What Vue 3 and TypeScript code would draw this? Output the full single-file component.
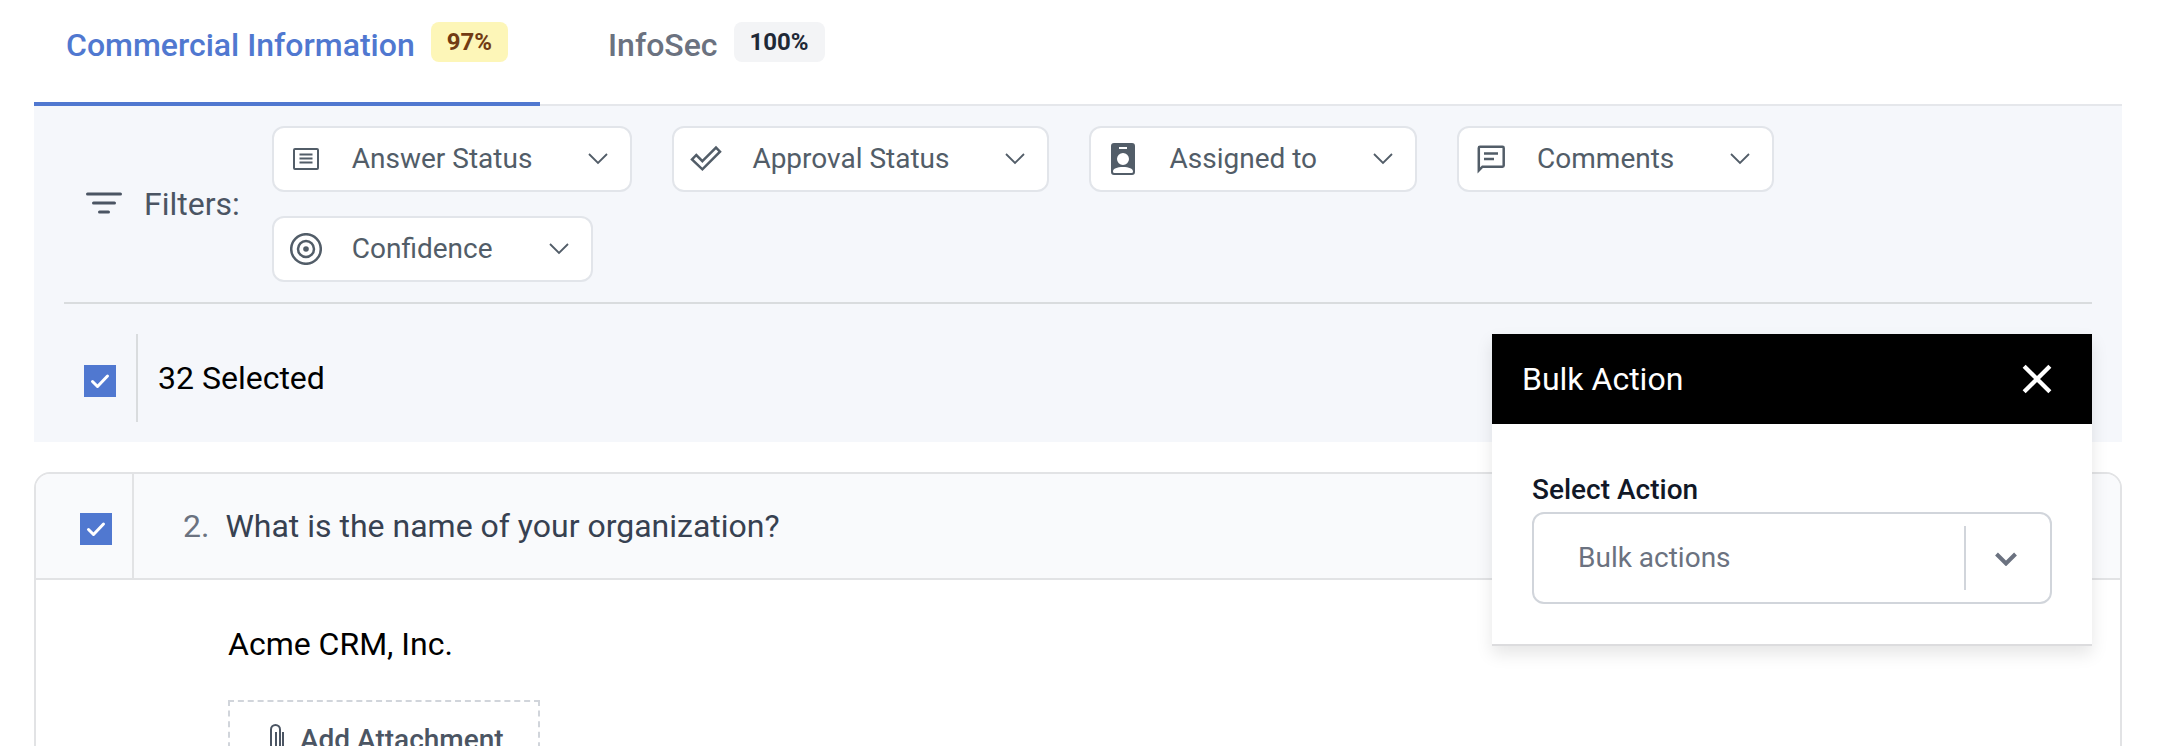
<script setup lang="ts">
import { ref } from 'vue'

interface Tab {
  name: string
  score: string
  tone: 'warn' | 'neutral'
}

interface Filter {
  label: string
  icon: 'answer' | 'approval' | 'assigned' | 'comments' | 'confidence'
}

const tabs: Tab[] = [
  { name: 'Commercial Information', score: '97%', tone: 'warn' },
  { name: 'InfoSec', score: '100%', tone: 'neutral' },
]
const activeTab = ref('Commercial Information')

const filters: Filter[] = [
  { label: 'Answer Status', icon: 'answer' },
  { label: 'Approval Status', icon: 'approval' },
  { label: 'Assigned to', icon: 'assigned' },
  { label: 'Comments', icon: 'comments' },
  { label: 'Confidence', icon: 'confidence' },
]

const allSelected = ref(true)
const questionSelected = ref(true)
const selectedCount = ref(32)
const bulkOpen = ref(true)
const bulkAction = ref('')
</script>

<template>
  <main class="page">
    <nav class="tabs" role="tablist" aria-label="Questionnaire sections">
      <button
        v-for="tab in tabs"
        :key="tab.name"
        type="button"
        role="tab"
        class="tab"
        :class="{ active: tab.name === activeTab }"
        :aria-selected="tab.name === activeTab"
        @click="activeTab = tab.name"
      >
        <span>{{ tab.name }}</span>
        <span class="badge" :class="tab.tone">{{ tab.score }}</span>
      </button>
    </nav>

    <section class="panel">
      <div class="filters">
        <div class="filters-title">
          <svg class="filter-icon" viewBox="0 0 36 24" aria-hidden="true">
            <path d="M1.5 2h33M7.500 11h21M13.500 20h9" />
          </svg>
          <span>Filters:</span>
        </div>
        <div class="chips">
          <button v-for="filter in filters" :key="filter.label" type="button" class="chip">
            <svg v-if="filter.icon === 'answer'" class="chip-icon" viewBox="0 0 32 32" aria-hidden="true">
              <rect x="4" y="6" width="24" height="20" rx="1" class="line" />
              <path d="M9.5 11.5h13M9.5 15.5h13M9.5 19.5h13" class="line" />
            </svg>
            <svg v-else-if="filter.icon === 'approval'" class="chip-icon" viewBox="0 0 32 32" aria-hidden="true">
              <path d="M12.400 18.200L26 4.600l4 4.100L12.400 26.300L2 16.500l4.300-4.500z" class="line thick" />
            </svg>
            <svg v-else-if="filter.icon === 'assigned'" class="chip-icon" viewBox="0 0 32 32" aria-hidden="true">
              <path
                fill-rule="evenodd"
                class="solid"
                d="M7 0h18a3 3 0 0 1 3 3v26a3 3 0 0 1-3 3H7a3 3 0 0 1-3-3V3a3 3 0 0 1 3-3zM12 4v2h8V4zM16 10a6 6 0 1 0 0 12a6 6 0 1 0 0-12zM6 28.500a1.500 1.500 0 0 0 1.500 1.500h17a1.500 1.500 0 0 0 1.500-1.500c0-3-4-4.500-10-4.500s-10 1.500-10 4.500z"
              />
            </svg>
            <svg v-else-if="filter.icon === 'comments'" class="chip-icon" viewBox="0 0 32 32" aria-hidden="true">
              <path d="M5 3.800h22.500a1.200 1.200 0 0 1 1.200 1.200v17.500a1.200 1.200 0 0 1-1.200 1.200H7.500L3.800 27.400V5a1.200 1.200 0 0 1 1.200-1.200z" class="line thick" />
              <path d="M9 10.500h14M9 16h10" class="line thick" />
            </svg>
            <svg v-else class="chip-icon" viewBox="0 0 32 32" aria-hidden="true">
              <circle cx="16" cy="16" r="14.800" class="line thick" />
              <circle cx="16" cy="16" r="8" class="line thick" />
              <circle cx="16" cy="16" r="2.800" class="solid" />
            </svg>
            <span>{{ filter.label }}</span>
            <svg class="chip-arrow" viewBox="0 0 20 12" aria-hidden="true">
              <path d="M1 1l9 9l9-9" />
            </svg>
          </button>
        </div>
      </div>

      <div class="selection">
        <label class="check">
          <input v-model="allSelected" type="checkbox" aria-label="Select all questions" />
          <svg viewBox="0 0 32 32" aria-hidden="true"><path d="M8.500 16.500l5 5l10-10.500" /></svg>
        </label>
        <span class="selected-count">{{ selectedCount }} Selected</span>

        <aside v-if="bulkOpen" class="popover" aria-labelledby="bulk-title">
          <header class="popover-head">
            <h2 id="bulk-title">Bulk Action</h2>
            <button type="button" class="close" aria-label="Close" @click="bulkOpen = false">
              <svg viewBox="0 0 28 28" aria-hidden="true"><path d="M2 2l24 24M26 2L2 26" /></svg>
            </button>
          </header>
          <div class="popover-body">
            <label for="bulk-select">Select Action</label>
            <div class="select-box">
              <select id="bulk-select" v-model="bulkAction">
                <option value="">Bulk actions</option>
              </select>
              <span class="select-arrow">
                <svg viewBox="0 0 24 16" aria-hidden="true"><path d="M2.500 4l9.500 9.500L21.500 4" /></svg>
              </span>
            </div>
          </div>
        </aside>
      </div>
    </section>

    <article class="card">
      <header class="card-head">
        <label class="card-check check">
          <input v-model="questionSelected" type="checkbox" aria-label="Select question 2" />
          <svg viewBox="0 0 32 32" aria-hidden="true"><path d="M8.500 16.500l5 5l10-10.500" /></svg>
        </label>
        <h3 class="question"><span class="number">2.</span>What is the name of your organization?</h3>
      </header>
      <div class="card-body">
        <p class="answer">Acme CRM, Inc.</p>
        <button type="button" class="attach">
          <svg viewBox="0 0 14 32" aria-hidden="true">
            <path d="M13 8v15a6 6 0 0 1-12 0V5.500a4.500 4.500 0 0 1 9 0V22a2 2 0 0 1-4 0V8" />
          </svg>
          <span>Add Attachment</span>
        </button>
      </div>
    </article>
  </main>
</template>

<style>
html,
body {
  margin: 0;
  background: #ffffff;
}

body {
  overflow: hidden;
}
</style>

<style scoped>
.page {
  box-sizing: border-box;
  height: 100vh;
  overflow: hidden;
  padding: 0 38px 0 34px;
  font-family: Roboto, 'Liberation Sans', sans-serif;
  font-size: 32px;
  line-height: 40px;
  color: #000000;
}

button,
select,
h2,
h3,
p {
  margin: 0;
  font: inherit;
  color: inherit;
}

svg {
  display: block;
  flex: none;
  fill: none;
  stroke: currentColor;
}

.tabs {
  display: flex;
  gap: 36px;
  border-bottom: 2px solid #e5e7eb;
}

.tab {
  display: flex;
  align-items: flex-start;
  gap: 16px;
  margin-bottom: -2px;
  padding: 22px 32px 40px;
  border: 0;
  border-bottom: 4px solid transparent;
  background: none;
  font-weight: 500;
  color: #6b7280;
}

.tab > span:first-child {
  padding-top: 6px;
  line-height: 34px;
}

.tab.active {
  border-bottom-color: #5078d0;
  color: #5078d0;
}

.badge {
  padding: 0 16px;
  border-radius: 8px;
  font-size: 24px;
  font-weight: 700;
  line-height: 40px;
}

.badge.warn {
  background: #fdf6b8;
  color: #723b13;
}

.badge.neutral {
  background: #f3f4f6;
  color: #1f2937;
}

.panel {
  padding: 20px 30px;
  background: #f5f7fb;
}

.filters {
  display: flex;
  align-items: center;
  gap: 32px;
  padding: 0 0 20px 22px;
  border-bottom: 2px solid #d9dcde;
}

.filters-title {
  display: flex;
  flex: none;
  align-items: center;
  gap: 22px;
  color: #4b5563;
}

.filter-icon {
  width: 36px;
  height: 24px;
  stroke-width: 3;
  stroke-linecap: round;
}

.chips {
  display: flex;
  flex-wrap: wrap;
  gap: 24px 40px;
  max-width: 1600px;
}

.chip {
  display: flex;
  align-items: center;
  padding: 11px 22px 11px 16px;
  border: 2px solid #e2e5ea;
  border-radius: 12px;
  background: #ffffff;
  font-size: 28px;
  color: #525d68;
}

.chip-icon {
  width: 32px;
  height: 32px;
  margin-right: 30px;
}

.chip-icon .line {
  stroke-width: 2;
}

.chip-icon .thick {
  stroke-width: 2.500;
}

.chip-icon .solid {
  fill: currentColor;
  stroke: none;
}

.chip-arrow {
  width: 20px;
  height: 12px;
  margin-left: 56px;
  stroke-width: 1.800;
}

.selection {
  position: relative;
  display: flex;
  align-items: center;
  height: 88px;
  margin-top: 30px;
  padding-left: 20px;
}

.check {
  display: grid;
  padding-top: 6px;
  place-items: center;
}

.check input {
  grid-area: 1 / 1;
  width: 32px;
  height: 32px;
  margin: 0;
  appearance: none;
  border: 2px solid #5078d0;
  background: #ffffff;
}

.check input:checked {
  background: #5078d0;
}

.check svg {
  grid-area: 1 / 1;
  width: 32px;
  height: 32px;
  stroke: #ffffff;
  stroke-width: 3;
  stroke-linecap: round;
  stroke-linejoin: round;
  pointer-events: none;
}

.selected-count {
  display: flex;
  align-items: center;
  align-self: stretch;
  margin-left: 20px;
  padding-left: 20px;
  border-left: 2px solid #d9dcde;
}

.popover {
  position: absolute;
  z-index: 2;
  top: 0;
  right: 0;
  width: 600px;
  border-bottom: 2px solid #dcdcde;
  background: #ffffff;
  box-shadow: 0 8px 16px rgba(0, 0, 0, 0.1);
}

.popover-head {
  display: flex;
  align-items: center;
  justify-content: space-between;
  height: 90px;
  padding: 0 40px 0 30px;
  background: #000000;
  color: #ffffff;
}

.popover-head h2 {
  font-weight: 400;
}

.close {
  padding: 0;
  border: 0;
  background: none;
}

.close svg {
  width: 30px;
  height: 30px;
  stroke-width: 4;
}

.popover-body {
  padding: 46px 40px 40px;
}

.popover-body label {
  display: block;
  padding-bottom: 2px;
  font-size: 28px;
  font-weight: 500;
  color: #111827;
}

.select-box {
  position: relative;
  display: flex;
}

.select-box select {
  box-sizing: border-box;
  width: 100%;
  height: 92px;
  padding: 0 96px 0 44px;
  appearance: none;
  border: 2px solid #d1d5db;
  border-radius: 12px;
  background: #ffffff;
  font-size: 28px;
  color: #6b7280;
}

.select-arrow {
  position: absolute;
  top: 14px;
  right: 6px;
  bottom: 14px;
  display: grid;
  width: 80px;
  place-items: center;
  border-left: 2px solid #d1d5db;
  color: #6b7280;
  pointer-events: none;
}

.select-arrow svg {
  width: 24px;
  height: 16px;
  stroke-width: 4;
}

.card {
  margin-top: 30px;
  border: 2px solid #e2e3e5;
  border-radius: 16px;
}

.card-head {
  display: flex;
  align-items: stretch;
  height: 104px;
  border-bottom: 2px solid #e2e3e5;
  border-radius: 14px 14px 0 0;
  background: #f9fafc;
}

.card-check {
  padding-right: 20px;
  padding-left: 44px;
  border-right: 2px solid #e2e3e5;
}

.question {
  display: flex;
  align-items: center;
  gap: 16px;
  padding-left: 49px;
  font-weight: 400;
  color: #374151;
}

.number {
  color: #6b7280;
}

.card-body {
  padding: 44px 40px 40px 192px;
}

.attach {
  display: flex;
  align-items: center;
  gap: 16px;
  margin-top: 36px;
  padding: 18px 34px 18px 40px;
  border: 2px dashed #d1d5db;
  background: #ffffff;
  font-size: 28px;
  font-weight: 500;
  color: #4b5563;
}

.attach svg {
  width: 14px;
  height: 32px;
  stroke-width: 2;
}
</style>
